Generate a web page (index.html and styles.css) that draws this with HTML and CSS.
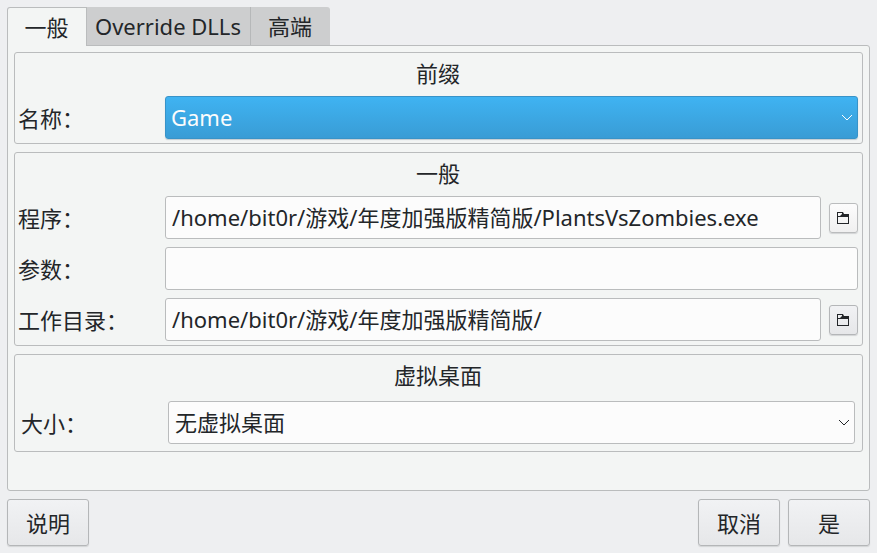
FILE: index.html
```html
<!DOCTYPE html>
<html lang="zh-CN">
<head>
<meta charset="utf-8">
<meta name="viewport" content="width=device-width, initial-scale=1">
<title>Game</title>
<link rel="stylesheet" href="styles.css">
</head>
<body>
<form class="dialog">
  <div class="tabs" role="tablist">
    <button class="tab active" type="button" role="tab" aria-selected="true">一般</button>
    <button class="tab" type="button" role="tab" aria-selected="false">Override DLLs</button>
    <button class="tab" type="button" role="tab" aria-selected="false">高端</button>
  </div>
  <div class="panel" role="tabpanel">
    <section class="group">
      <h2 class="title">前缀</h2>
      <div class="row">
        <label for="prefix">名称：</label>
        <div class="combo primary">
          <select id="prefix"><option>Game</option></select>
          <svg class="chevron" viewBox="0 0 12 7"><path d="M1 1l5 5 5-5"/></svg>
        </div>
      </div>
    </section>
    <section class="group">
      <h2 class="title">一般</h2>
      <div class="row">
        <label for="program">程序：</label>
        <div class="picker">
          <input id="program" type="text" value="/home/bit0r/游戏/年度加强版精简版/PlantsVsZombies.exe">
          <button class="browse light" type="button" aria-label="浏览">
            <svg viewBox="0 0 12 12"><path d="M0 0h6l1 2h5v10H0zM1 5v6h10V5zM1 1v3h2l2-2V1z" fill-rule="evenodd"/></svg>
          </button>
        </div>
      </div>
      <div class="row">
        <label for="args">参数：</label>
        <input id="args" type="text">
      </div>
      <div class="row">
        <label for="workdir">工作目录：</label>
        <div class="picker">
          <input id="workdir" type="text" value="/home/bit0r/游戏/年度加强版精简版/">
          <button class="browse" type="button" aria-label="浏览">
            <svg viewBox="0 0 12 12"><path d="M0 0h6l1 2h5v10H0zM1 5v6h10V5zM1 1v3h2l2-2V1z" fill-rule="evenodd"/></svg>
          </button>
        </div>
      </div>
    </section>
    <section class="group inset">
      <h2 class="title">虚拟桌面</h2>
      <div class="row">
        <label for="size">大小：</label>
        <div class="combo">
          <select id="size"><option>无虚拟桌面</option></select>
          <svg class="chevron" viewBox="0 0 12 7"><path d="M1 1l5 5 5-5"/></svg>
        </div>
      </div>
    </section>
  </div>
  <div class="actions">
    <button class="push help" type="button">说明</button>
    <button class="push" type="button">取消</button>
    <button class="push" type="submit">是</button>
  </div>
</form>
</body>
</html>
```
FILE: styles.css
```css
* {
  box-sizing: border-box;
}

body {
  margin: 0;
  background: #eeeff1;
  color: #232629;
}

body, button, input, select {
  font-family: "Noto Sans", "Noto Sans CJK SC", sans-serif;
  font-size: 22px;
  line-height: 30px;
}

button, input, select {
  margin: 0;
  color: inherit;
}

.dialog {
  display: flex;
  flex-direction: column;
  min-height: 100vh;
  padding: 7px;
}

.tabs {
  display: flex;
  margin-bottom: -1px;
}

.tab {
  min-width: 79px;
  height: 39px;
  padding: 0 9px 1px 8px;
  border: 0;
  border-right: 1px solid #b6b8b9;
  border-bottom: 1px solid #babcbd;
  background: #cdcecf;
}

.tab.active {
  position: relative;
  min-width: 80px;
  border: 1px solid #babcbd;
  border-bottom: 0;
  border-radius: 3px 0 0;
  background: #f3f5f4;
}

.tab:last-child {
  border-right: 0;
  border-radius: 0 3px 0 0;
}

.panel {
  display: flex;
  flex: 1;
  flex-direction: column;
  gap: 8px;
  padding: 6px;
  border: 1px solid #babcbd;
  border-radius: 0 3px 3px;
  background: #f3f5f4;
}

.group {
  display: flex;
  flex-direction: column;
  gap: 8px;
  padding: 0 4px 4px 3px;
  border: 1px solid #babcbd;
  border-radius: 3px;
}

.group.inset {
  padding: 3px 7px 7px 6px;
}

.title {
  height: 43px;
  margin: 0 0 -8px;
  font-size: 22px;
  font-weight: 400;
  line-height: 41px;
  text-align: center;
}

.inset .title {
  margin-top: -3px;
  margin-bottom: -5px;
}

.row {
  display: grid;
  grid-template-columns: 147px 1fr;
  align-items: center;
}

.combo {
  position: relative;
}

input, select {
  display: block;
  width: 100%;
  min-width: 0;
  height: 43px;
  padding: 0 6px 3px;
  border: 1px solid #babcbd;
  border-radius: 3px;
  outline: 0;
  background: #fcfcfc;
}

select {
  appearance: none;
  padding: 0 24px 2px 6px;
}

.primary select {
  padding-left: 5px;
  border-color: #3893c8;
  background: linear-gradient(#3fb3f2, #399cd5);
  box-shadow: 0 1px 1px #c2cdd2;
  color: #fcfcfc;
}

.chevron {
  position: absolute;
  top: 18px;
  right: 5px;
  width: 12px;
  height: 7px;
  fill: none;
  stroke: #232629;
  pointer-events: none;
}

.primary .chevron {
  stroke: #fcfcfc;
}

.picker {
  display: flex;
  gap: 8px;
  align-items: center;
}

.picker input {
  flex: 1;
}

.browse, .push {
  border: 1px solid #b4b6b8;
  border-radius: 3px;
  background: linear-gradient(#f1f2f4, #e6e7e9);
  box-shadow: 0 1px 1px #d2d4d5;
}

.browse {
  display: flex;
  width: 29px;
  height: 30px;
  padding: 0 1px 0 0;
  align-items: center;
  justify-content: center;
}

.browse.light {
  border-color: #babcbd;
  background: linear-gradient(#fcfcfc, #f0f0f0);
}

.browse svg {
  flex: none;
  width: 12px;
  height: 12px;
  fill: #232629;
}

.actions {
  display: flex;
  gap: 8px;
  margin-top: 8px;
}

.push {
  width: 82px;
  height: 47px;
  padding: 0;
}

.help {
  margin-right: auto;
}
```
